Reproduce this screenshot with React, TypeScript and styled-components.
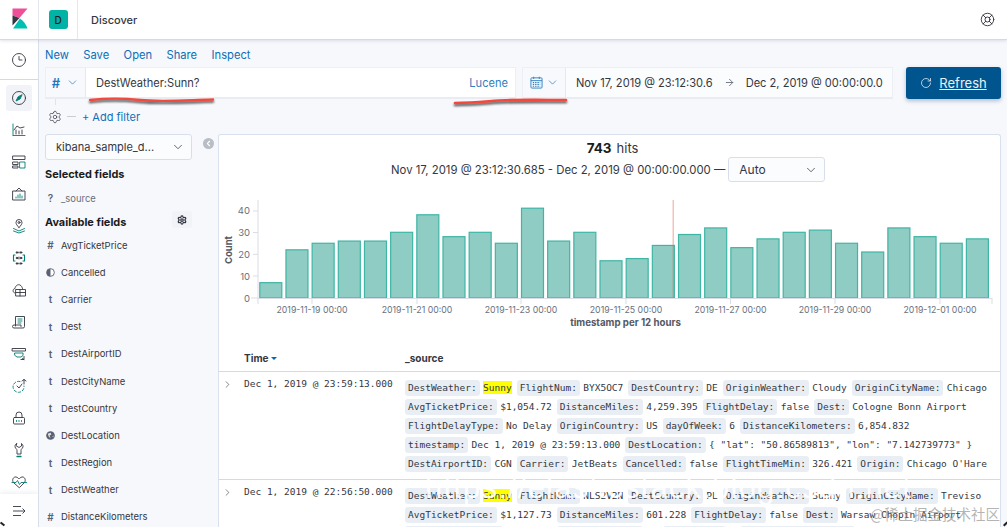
import React from "react";
import styled, { createGlobalStyle } from "styled-components";
import { ChevronDown, ChevronRight, LifeBuoy, RotateCw, ArrowRight, Settings } from "lucide-react";

const Global = createGlobalStyle`
  html, body { margin: 0; padding: 0; height: 527px; overflow: hidden; background: #f6f8fc; }
  * { box-sizing: border-box; }
  #root { height: 527px; font-family: Inter, "Liberation Sans", sans-serif; color: #343741; }
`;

const Page = styled.div`
  position: relative; width: 1007px; height: 527px; overflow: hidden; display: flex; flex-direction: column;
`;
const Header = styled.header`
  height: 40px; flex: none; background: #fff; border-bottom: 1px solid #d3dae6; box-shadow: 0 1px 3px rgba(152,162,179,.3);
  display: flex; align-items: stretch; position: relative; z-index: 2;
`;
const LogoCell = styled.div`
  width: 39px; border-right: 1px solid #e3e7ef; display: flex;
  svg { display: block; }
`;
const BadgeCell = styled.div`
  width: 39px; border-right: 1px solid #e3e7ef; display: flex; align-items: center; justify-content: center;
`;
const Badge = styled.div`
  width: 19px; height: 19px; border-radius: 3px; background: #00b3a4; color: #1a1c21; font-size: 10px; font-weight: 500;
  display: flex; align-items: center; justify-content: center;
`;
const Title = styled.div`
  margin-left: 13px; font-size: 11px; font-weight: 500; color: #343741; align-self: center;
`;
const HelpCell = styled.div`
  margin-left: auto; width: 40px; display: flex; align-items: center; justify-content: center; color: #343741;
`;
const Body = styled.div`
  flex: 1; display: flex; min-height: 0;
`;
const Nav = styled.nav`
  width: 39px; flex: none; background: #fff; border-right: 1px solid #d9dfea; display: flex; flex-direction: column; overflow: hidden;
`;
const RecentItem = styled.div`
  height: 40px; flex: none; border-bottom: 1px solid #d3dae6; display: flex; align-items: center; justify-content: center;
`;
const NavList = styled.div`
  padding-top: 2px; flex: none;
`;
const NavItem = styled.div<{ $active?: boolean }>`
  height: 32px; display: flex; align-items: center; justify-content: center; position: relative;
  &::before {
    content: ""; position: absolute; left: 6px; top: 3px; width: 26px; height: 26px; border-radius: 3px;
    background: ${(p) => (p.$active ? "#f1f3f8" : "transparent")};
  }
  svg { position: relative; }
`;
const NavToggle = styled.div`
  height: 34px; margin-top: -4px; flex: none; background: #fff; position: relative; box-shadow: 0 -2px 4px rgba(152,162,179,.15);
  display: flex; align-items: center; justify-content: center;
`;
const Main = styled.main`
  flex: 1; min-width: 0; display: flex; flex-direction: column; background: #f7f8fc;
`;
const Menu = styled.div`
  height: 27px; flex: none; padding: 2px 0 0 6px; display: flex; align-items: center; gap: 14.4px;
`;
const MenuLink = styled.span`
  font-size: 11.2px; color: #0b6fb8;
`;
const QueryBar = styled.div`
  height: 32px; flex: none; margin-left: 6px; width: 956px; display: flex; align-items: stretch;
`;
const Group = styled.div<{ $w: number; $gap?: number }>`
  width: ${(p) => p.$w}px; margin-left: ${(p) => p.$gap ?? 0}px; flex: none; display: flex; background: #fff; border: 1px solid #eceff4; border-bottom: 2px solid #e9ecf2;
`;
const Prepend = styled.div<{ $w: number; $gap: number }>`
  width: ${(p) => p.$w}px; flex: none; background: #f8f9fc; border-right: 1px solid #e4e8ef; display: flex; align-items: center; justify-content: center; gap: ${(p) => p.$gap}px; color: #1f78bd; font-size: 13px; font-weight: 600;
`;
const QueryText = styled.div`
  flex: 1; padding-left: 10px; font-size: 11.1px; line-height: 30px; color: #343741;
`;
const LuceneLink = styled.div`
  padding-right: 7px; font-size: 11.1px; line-height: 30px; color: #2f80c0;
`;
const DateRange = styled.div`
  flex: 1; display: flex; align-items: center; padding-left: 10px; font-size: 11.1px; color: #343741; background: #fbfcfe;
`;
const DateValue = styled.span`
  white-space: nowrap;
`;
const DateArrow = styled.span`
  width: 33px; flex: none; display: flex; justify-content: center; color: #69707d;
`;
const RefreshButton = styled.div`
  width: 95px; margin-left: 13px; flex: none; background: #00558f; border-radius: 3px; box-shadow: 0 2px 4px rgba(0,60,110,.3);
  display: flex; align-items: center; justify-content: center; gap: 7px; color: #e8f1f8; font-size: 13px;
  span { text-decoration: underline; }
`;
const FilterRow = styled.div`
  height: 35px; flex: none; padding-left: 9px; display: flex; align-items: center; color: #343741; position: relative;
  &::before { content: ""; position: absolute; left: 15.5px; top: 0; width: 1px; height: 6px; background: #dfe3ea; }
`;
const FilterDash = styled.span`
  width: 9px; height: 1px; background: #c8cdd6; margin: 0 6px 0 5px;
`;
const AddFilter = styled.span`
  font-size: 11px; color: #1170b8;
`;
const Content = styled.div`
  flex: 1; min-height: 0; display: flex;
`;
const Sidebar = styled.aside`
  width: 179px; flex: none; padding-left: 6px; position: relative; overflow: hidden;
`;
const SelectRow = styled.div`
  display: flex; align-items: flex-start; gap: 11px;
`;
const IndexSelect = styled.div`
  width: 147px; height: 26px; flex: none; background: #fbfcfe; border: 1px solid #d9dfea; border-radius: 3px; padding: 0 6px 0 10px;
  display: flex; align-items: center; justify-content: space-between; font-size: 11px; color: #343741;
`;
const Collapse = styled.div`
  width: 11px; height: 11px; margin-top: 4px; border-radius: 50%; background: #b8bdc6; color: #fff; display: flex; align-items: center; justify-content: center;
`;
const SectionTitle = styled.div<{ $top: number }>`
  width: 147px; height: 18px; margin-top: ${(p) => p.$top}px; font-size: 10.95px; font-weight: 700; line-height: 18px; color: #1a1c21;
  display: flex; align-items: center; justify-content: space-between;
`;
const GearBox = styled.div`
  width: 20px; height: 17px; border-radius: 3px; background: #f1f3f8; color: #343741; display: flex; align-items: center; justify-content: center; margin-top: -5px;
`;
const Field = styled.div<{ $h: number; $muted?: boolean }>`
  height: ${(p) => p.$h}px; display: flex; align-items: center; font-size: 9.45px; color: ${(p) => (p.$muted ? "#69707d" : "#343741")};
`;
const FieldIcon = styled.span`
  width: 16px; flex: none; display: flex; justify-content: center; padding-right: 5px; font-size: 10px; font-weight: 600; color: #5a6170;
`;
const FieldList = styled.div`
  padding-top: 0.5px;
`;
const Card = styled.section`
  flex: 1; min-width: 0; margin-right: 6px; background: #fff; border: 1px solid #d9e1ef; border-bottom: 0; border-radius: 3px 3px 0 0; overflow: hidden;
`;
const Hits = styled.div`
  height: 24px; display: flex; align-items: center; justify-content: center; gap: 5px; font-size: 13px; color: #343741; padding: 1px 0 0 6px;
  strong { font-weight: 700; font-size: 13.5px; color: #1a1c21; }
`;
const RangeLine = styled.div`
  height: 25px; margin-top: -2px; display: flex; align-items: center; padding-left: 172px; gap: 3px; font-size: 11.35px; color: #343741; white-space: nowrap;
`;
const IntervalSelect = styled.div`
  width: 97px; height: 25px; flex: none; background: #fbfcfe; border: 1px solid #d9dfea; border-radius: 3px; padding: 0 6px 0 10px;
  display: flex; align-items: center; justify-content: space-between; font-size: 12px;
`;
const Chart = styled.svg`
  display: block; margin-top: 8px;
  text { font-family: Inter, "Liberation Sans", sans-serif; }
`;
const TableHead = styled.div`
  height: 36px; display: grid; grid-template-columns: 25px 161px 1fr; align-items: center; padding-top: 8px; border-bottom: 1px solid #d3dae6; font-size: 10px; font-weight: 700; color: #343741;
`;
const SortMark = styled.span`
  display: inline-block; width: 0; height: 0; margin-left: 3px; border-left: 3.5px solid transparent; border-right: 3.5px solid transparent; border-top: 3.5px solid #006bb4; vertical-align: middle;
`;
const Row = styled.div`
  display: grid; grid-template-columns: 25px 161px 1fr; padding: 6px 0; border-bottom: 1px solid #d3dae6;
`;
const Chevron = styled.div`
  height: 12px; padding-left: 3px; display: flex; align-items: center; color: #343741;
`;
const TimeCell = styled.div`
  font-family: "DejaVu Sans Mono", "Liberation Mono", monospace; font-size: 9.5px; line-height: 12px; color: #343741; white-space: nowrap;
`;
const SourceLine = styled.div`
  height: 19px; display: flex; align-items: center; font-family: "DejaVu Sans Mono", "Liberation Mono", monospace; font-size: 9.5px; color: #343741; white-space: pre;
`;
const Tag = styled.span`
  height: 16px; line-height: 16px; padding: 0 3px; margin-right: 3.4px; background: #e9eef5; border-radius: 3px;
`;
const Value = styled.span`
  margin-right: 5px;
`;
const Mark = styled.mark`
  background: #ffff00; color: #343741; padding: 1px 0;
`;
const Scribble = styled.svg<{ $x: number; $y: number }>`
  position: absolute; left: ${(p) => p.$x}px; top: ${(p) => p.$y}px; z-index: 5; overflow: visible; filter: drop-shadow(0 2px 1px rgba(40,40,40,.8));
`;
const Watermark = styled.div`
  position: absolute; left: 425px; top: 470px; z-index: 6; font-family: "Liberation Sans", sans-serif; font-size: 31px; letter-spacing: 1.2px; color: rgba(255,255,255,.92); white-space: nowrap;
`;
const Credit = styled.div`
  position: absolute; right: 7px; top: 503px; z-index: 7; font-family: "Noto Sans CJK SC", "Liberation Sans", sans-serif; font-size: 14.5px; color: rgba(130,130,130,.6); white-space: nowrap;
`;
const CornerMark = styled.div<{ $left: number }>`
  position: absolute; left: ${(p) => p.$left}px; top: 523px; z-index: 7; width: 5px; height: 2px; background: #222; transform: rotate(${(p) => (p.$left < 100 ? 40 : -45)}deg);
`;

const G = "#343741";
const T = "#017d73";

type IconProps = { children: React.ReactNode };
const NI = ({ children }: IconProps) => (
  <svg width="16" height="16" viewBox="0 0 16 16" fill="none" stroke={G} strokeWidth="0.9" strokeLinecap="round" strokeLinejoin="round">{children}</svg>
);

const navIcons: React.ReactNode[] = [
  <NI key="d"><circle cx="8" cy="8" r="6.5" /><path d="M11 5 9 9 5 11l2-4z" fill={T} stroke={T} /></NI>,
  <NI key="v"><path d="M2 2v11" stroke={T} /><path d="M2 13.5h12" stroke={T} /><path d="M3 8l3-4 3 2 4-1" /><path d="M5 12V8M8 12V9M11 12V8" /></NI>,
  <NI key="da"><rect x="2" y="2" width="12" height="3.5" /><rect x="2" y="8" width="5" height="2.5" /><rect x="2" y="12" width="5" height="2" /><rect x="9" y="8" width="5" height="6" stroke={T} /></NI>,
  <NI key="c"><path d="M2 5h12v9H2z" /><path d="M5 5l3-3 3 3" /><path d="M5 12v-1M7 12V9M9 12V8M11 12v-2" stroke={T} /></NI>,
  <NI key="m"><path d="M8 9.5C6 7.5 5 6 5 4.5a3 3 0 0 1 6 0C11 6 10 7.5 8 9.5z" /><circle cx="8" cy="4.5" r="1" /><path d="M2.5 10.5 8 13l5.5-2.5M2.5 13 8 15l5.5-2" stroke={T} /></NI>,
  <NI key="ml"><path d="M4 5H2.500v6H4M12 5h1.500v6H12" stroke={T} strokeWidth="1.1" /><circle cx="6" cy="2.500" r=".8" fill={G} /><circle cx="10" cy="2.500" r=".8" fill={G} /><circle cx="6" cy="8" r=".8" fill={G} /><circle cx="10" cy="8" r=".8" fill={G} /><circle cx="6" cy="13.500" r=".8" fill={G} /><circle cx="10" cy="13.500" r=".8" fill={G} /><path d="M8 2v1M8 7v2M8 13v1" /></NI>,
  <NI key="i"><path d="M3.5 11C1.5 10 1.5 7 4 6.5 4.5 3.5 7 2 9 3c1.500.8 2 2 2.500 3.500" /><rect x="5" y="7.500" width="9.500" height="6.500" /><path d="M5 10.500h9.500M9 7.500V14" /></NI>,
  <NI key="l"><path d="M4.500 12V2.500h9v1.500" /><path d="M13.500 3.500V12.500a1.500 1.500 0 0 1-1.500 1.500H3a1.500 1.500 0 0 1 0-3h7v1.500" /><path d="M7 5h4M7 7h4M7 9h3" stroke={T} /></NI>,
  <NI key="u"><path d="M1.500 2.500h13v2.500h-13z" /><path d="M4 7h8v2.500L10 11H6L4 9.500z" stroke={T} /><path d="M10 13.500h3v-3M13 13.500l-1.500-1" /></NI>,
  <NI key="a"><path d="M9 3.500A5.500 5.500 0 1 0 13 8" strokeDasharray="2.500 2" stroke={T} /><path d="M6 8l2 2 3-4" /><path d="M13 6V1.500M11 3l2-1.500L15 3" /></NI>,
  <NI key="s"><rect x="2.500" y="7.500" width="11" height="6.500" rx="1" /><path d="M5 7.500V5a3 3 0 0 1 6 0v2.500" /><path d="M5.500 10.500v1M8 10.500v1M10.500 10.500v1" stroke={T} /></NI>,
  <NI key="w"><path d="M5.500 1.500C4 2.500 3.500 4.500 4.500 6c.7 1 1.500 1.200 1.500 2.500V12h4V8.500c0-1.300.8-1.500 1.500-2.500 1-1.500.5-3.500-1-4.500V4L8 5.500 5.500 4z" /><path d="M6 14.500h4" stroke={T} strokeWidth="1.300" /></NI>,
  <NI key="h"><path d="M8 13.500 2.500 8.500C.5 6 2.500 2.500 5 3c1.500.2 2.500 1.500 3 2 .5-.5 1.500-1.800 3-2 2.500-.5 4.500 3 2.500 5.500z" /><path d="M1 8.500h4l1.500-2 2 4 1.500-2h5.500" stroke={T} /></NI>,
];

const ToggleIcon = () => (
  <svg width="16" height="16" viewBox="0 0 16 16" fill="none" stroke={G} strokeWidth="0.9">
    <path d="M2 3.500h8M2 8h12M2 12.500h8M11.500 5.500 14 8l-2.500 2.500" />
  </svg>
);

const CalendarIcon = () => (
  <svg width="13" height="13" viewBox="0 0 14 14" fill="none" stroke="#2f80c0" strokeWidth="1">
    <rect x="1" y="2" width="12" height="11" rx="1" />
    <path d="M1 5h12M4 .8v2.400M10 .8v2.400" />
    <path d="M3 7h8M3 9h8M3 11h8" strokeWidth="1.200" strokeDasharray="1.500 1" />
  </svg>
);

const Globe = () => (
  <svg width="9" height="9" viewBox="0 0 10 10"><circle cx="5" cy="5" r="4.800" fill="#5a6170" /><path d="M2 3l3-1 1 2-2 1 1 3-2-2zM7 6l1.500-1-.5 2z" fill="#dfe3ea" /></svg>
);
const HalfCircle = () => (
  <svg width="9" height="9" viewBox="0 0 10 10"><circle cx="5" cy="5" r="4.300" fill="#fff" stroke="#5a6170" /><path d="M5 .7a4.300 4.300 0 0 0 0 8.600z" fill="#5a6170" /></svg>
);

const fields: [React.ReactNode, string][] = [
  ["#", "AvgTicketPrice"], [<HalfCircle key="h" />, "Cancelled"], ["t", "Carrier"], ["t", "Dest"], ["t", "DestAirportID"],
  ["t", "DestCityName"], ["t", "DestCountry"], [<Globe key="g" />, "DestLocation"], ["t", "DestRegion"], ["t", "DestWeather"], ["#", "DistanceKilometers"],
];

const values = [7, 22, 25, 26, 26, 30, 38, 28, 30, 25, 41, 26, 30, 17, 18, 24, 29, 32, 23, 27, 30, 31, 25, 21, 32, 28, 25, 27];
const ticks: [number, string][] = [
  [312, "2019-11-19 00:00"], [417, "2019-11-21 00:00"], [521, "2019-11-23 00:00"], [626, "2019-11-25 00:00"],
  [730.5, "2019-11-27 00:00"], [835, "2019-11-29 00:00"], [940, "2019-12-01 00:00"],
];

type Pair = [string, string];
const row1: Pair[][] = [
  [["DestWeather", "*Sunny"], ["FlightNum", "BYX5OC7"], ["DestCountry", "DE"], ["OriginWeather", "Cloudy"], ["OriginCityName", "Chicago"]],
  [["AvgTicketPrice", "$1,054.72"], ["DistanceMiles", "4,259.395"], ["FlightDelay", "false"], ["Dest", "Cologne Bonn Airport"]],
  [["FlightDelayType", "No Delay"], ["OriginCountry", "US"], ["dayOfWeek", "6"], ["DistanceKilometers", "6,854.832"]],
  [["timestamp", "Dec 1, 2019 @ 23:59:13.000"], ["DestLocation", '{ "lat": "50.86589813", "lon": "7.142739773" }']],
  [["DestAirportID", "CGN"], ["Carrier", "JetBeats"], ["Cancelled", "false"], ["FlightTimeMin", "326.421"], ["Origin", "Chicago O'Hare"]],
];
const row2: Pair[][] = [
  [["DestWeather", "*Sunny"], ["FlightNum", "NLS2V2N"], ["DestCountry", "PL"], ["OriginWeather", "Sunny"], ["OriginCityName", "Treviso"]],
  [["AvgTicketPrice", "$1,127.73"], ["DistanceMiles", "601.228"], ["FlightDelay", "false"], ["Dest", "Warsaw Chopin Airport"]],
  [["FlightDelayType", "No Delay"], ["OriginCountry", "IT"], ["dayOfWeek", "6"], ["DistanceKilometers", "967.590"]],
];

const SourceCell = ({ lines }: { lines: Pair[][] }) => (
  <div>
    {lines.map((line, i) => (
      <SourceLine key={i}>
        {line.map(([k, v]) => (
          <React.Fragment key={k}>
            <Tag>{k}:</Tag>
            <Value>{v.startsWith("*") ? <Mark>{v.slice(1)}</Mark> : v}</Value>
          </React.Fragment>
        ))}
      </SourceLine>
    ))}
  </div>
);

const HistogramChart = () => (
  <Chart width="781" height="146" viewBox="219 190 781 146">
    <path d="M258 200V298M251 298H258M253 276h5M253 254.300h5M253 232.500h5M253 211h5" stroke="#d9dde5" fill="none" />
    {values.map((v, i) => {
      const h = v * 2.19;
      return <rect key={i} x={259.8 + i * 26.17} y={298 - h} width={22} height={h} fill="#8fccc3" stroke="#3fb5a5" strokeWidth="1.2" />;
    })}
    <path d="M258 298.500H992" stroke="#d9dde5" />
    <path d="M258 298v6M992 298v6" stroke="#d9dde5" />
    {ticks.map(([x, l]) => (
      <g key={l}>
        <path d={`M${x} 298v6`} stroke="#d9dde5" />
        <text x={x} y={313} textAnchor="middle" fontSize="8.750" fill="#69707d">{l}</text>
      </g>
    ))}
    {[0, 10, 20, 30, 40].map((n) => (
      <text key={n} x={250} y={301.500 - n * 2.19} textAnchor="end" fontSize="9.500" fill="#69707d">{n}</text>
    ))}
    <text x={232} y={250} transform="rotate(-90 232 250)" textAnchor="middle" fontSize="9.500" fontWeight="700" fill="#535966">Count</text>
    <text x={625.500} y={326} textAnchor="middle" fontSize="9.700" fontWeight="700" fill="#535966">timestamp per 12 hours</text>
    <rect x="672.500" y="200" width="1.500" height="98" fill="#e7664c" opacity=".4" />
  </Chart>
);

export default function App() {
  return (
    <Page>
      <Global />
      <Header>
        <LogoCell>
          <svg width="38" height="39" viewBox="0 0 38 39">
            <path d="M12.500 8.500H27.500L19.500 18 12.500 15.500z" fill="#f04e98" />
            <path d="M12.500 15.500 19.500 18 12.500 25.500z" fill="#343741" />
            <path d="M13 28.500H27.500C26 24 23.500 21 20 18.500z" fill="#00bfb3" />
          </svg>
        </LogoCell>
        <BadgeCell><Badge>D</Badge></BadgeCell>
        <Title>Discover</Title>
        <HelpCell><LifeBuoy size={15} strokeWidth={1.500} /></HelpCell>
      </Header>
      <Body>
        <Nav>
          <RecentItem>
            <NI><circle cx="8" cy="8" r="6.500" /><path d="M8 4.500V8h3" /></NI>
          </RecentItem>
          <NavList>
            {navIcons.map((icon, i) => (
              <NavItem key={i} $active={i === 0}>{icon}</NavItem>
            ))}
          </NavList>
          <NavToggle><ToggleIcon /></NavToggle>
        </Nav>
        <Main>
          <Menu>
            <MenuLink>New</MenuLink>
            <MenuLink>Save</MenuLink>
            <MenuLink>Open</MenuLink>
            <MenuLink>Share</MenuLink>
            <MenuLink>Inspect</MenuLink>
          </Menu>
          <QueryBar>
            <Group $w={471}>
              <Prepend $w={40} $gap={6}># <ChevronDown size={13} strokeWidth={1.300} /></Prepend>
              <QueryText>DestWeather:Sunn?</QueryText>
              <LuceneLink>Lucene</LuceneLink>
            </Group>
            <Group $w={371} $gap={6}>
              <Prepend $w={43} $gap={3}><CalendarIcon /><ChevronDown size={13} strokeWidth={1.300} /></Prepend>
              <DateRange>
                <DateValue>Nov 17, 2019 @ 23:12:30.6</DateValue>
                <DateArrow><ArrowRight size={11} /></DateArrow>
                <DateValue>Dec 2, 2019 @ 00:00:00.0</DateValue>
              </DateRange>
            </Group>
            <RefreshButton><RotateCw size={12} strokeWidth={1.500} /><span>Refresh</span></RefreshButton>
          </QueryBar>
          <FilterRow>
            <Settings size={14} strokeWidth={1.200} />
            <FilterDash />
            <AddFilter>+ Add filter</AddFilter>
          </FilterRow>
          <Content>
            <Sidebar>
              <SelectRow>
                <IndexSelect>kibana_sample_d...<ChevronDown size={14} strokeWidth={1.300} /></IndexSelect>
                <Collapse><ChevronRight size={9} strokeWidth={3} style={{ transform: "rotate(180deg)" }} /></Collapse>
              </SelectRow>
              <SectionTitle $top={5}>Selected fields</SectionTitle>
              <Field $h={24} $muted style={{ marginTop: 3 }}><FieldIcon>?</FieldIcon>_source</Field>
              <SectionTitle $top={3}>Available fields<GearBox><Settings size={10} strokeWidth={3} /></GearBox></SectionTitle>
              <FieldList>
                {fields.map(([icon, name]) => (
                  <Field key={name} $h={27.200}><FieldIcon>{icon}</FieldIcon>{name}</Field>
                ))}
              </FieldList>
            </Sidebar>
            <Card>
              <Hits><strong>743</strong> hits</Hits>
              <RangeLine>
                Nov 17, 2019 @ 23:12:30.685 - Dec 2, 2019 @ 00:00:00.000 —
                <IntervalSelect>Auto<ChevronDown size={14} strokeWidth={1.300} /></IntervalSelect>
              </RangeLine>
              <HistogramChart />
              <TableHead>
                <span />
                <span>Time<SortMark /></span>
                <span>_source</span>
              </TableHead>
              <Row>
                <Chevron><ChevronRight size={11} strokeWidth={1.300} /></Chevron>
                <TimeCell>Dec 1, 2019 @ 23:59:13.000</TimeCell>
                <SourceCell lines={row1} />
              </Row>
              <Row>
                <Chevron><ChevronRight size={11} strokeWidth={1.300} /></Chevron>
                <TimeCell>Dec 1, 2019 @ 22:56:50.000</TimeCell>
                <SourceCell lines={row2} />
              </Row>
            </Card>
          </Content>
        </Main>
      </Body>
      <Scribble $x={90} $y={97} width="124" height="6" viewBox="0 0 124 6">
        <path d="M0 3C20 1 30 1 50 3S90 3.500 123 2.500" stroke="#f5483d" strokeWidth="2.400" fill="none" strokeLinecap="round" />
      </Scribble>
      <Scribble $x={454} $y={97} width="113" height="8" viewBox="0 0 113 8">
        <path d="M1 6C20 5.500 30 4.500 45 3.500S90 3 112 3" stroke="#f5483d" strokeWidth="2.600" fill="none" strokeLinecap="round" />
      </Scribble>
      <Watermark>https://elasticstack.blog.csdn.net</Watermark>
      <Credit>@稀土掘金技术社区</Credit>
      <CornerMark $left={0} />
      <CornerMark $left={1003} />
    </Page>
  );
}
